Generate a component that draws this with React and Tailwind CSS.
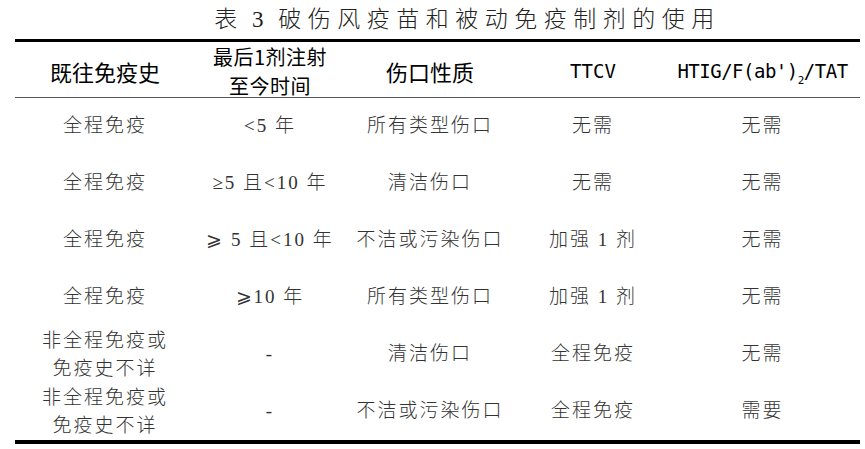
const cols = "grid grid-cols-[180px_150px_170px_156px_189px]";

const rows = [
  ["全程免疫", "<5 年", "所有类型伤口", "无需", "无需"],
  ["全程免疫", "≥5 且<10 年", "清洁伤口", "无需", "无需"],
  ["全程免疫", "⩾ 5 且<10 年", "不洁或污染伤口", "加强 1 剂", "无需"],
  ["全程免疫", "⩾10 年", "所有类型伤口", "加强 1 剂", "无需"],
  [["非全程免疫或", "免疫史不详"], "-", "清洁伤口", "全程免疫", "无需"],
  [["非全程免疫或", "免疫史不详"], "-", "不洁或污染伤口", "全程免疫", "需要"],
];

const serif = "font-[Liberation_Serif,Noto_Sans_CJK_SC,serif]";
const hei = "font-[Noto_Sans_CJK_SC,sans-serif]";
const mono = "font-[DejaVu_Sans_Mono,monospace]";

export default function App() {
  return (
    <div className="w-[865px] h-[449px] bg-white overflow-hidden">
      <div className={`h-[39px] flex items-center justify-center pl-[70px] text-[23px] leading-none tracking-[6.5px] [word-spacing:-4px] text-[#222] font-light ${serif}`}>
        表 3 破伤风疫苗和被动免疫制剂的使用
      </div>

      <div className="ml-[15px] w-[845px] border-t-[3px] border-b-[4px] border-black">
        <div className={`${cols} h-[56px] border-b border-[#555] text-black text-[22px] ${hei}`}>
          <Cell>既往免疫史</Cell>
          <Cell>
            <div className="text-[20px] leading-[29px] tracking-[0.5px]">
              <div>最后1剂注射</div>
              <div>至今时间</div>
            </div>
          </Cell>
          <Cell>伤口性质</Cell>
          <Cell>
            <span className={`${mono} text-[19px]`}>TTCV</span>
          </Cell>
          <Cell className="pr-[6px]">
            <span className={`${mono} text-[19px] tracking-[-0.5px]`}>
              HTIG/F(ab')<sub className="text-[11px] align-[-3px]">2</sub>/TAT
            </span>
          </Cell>
        </div>

        {rows.map((r, i) => (
          <div key={i} className={`${cols} h-[57px] text-[19px] text-[#333] tracking-[2px] font-light ${serif}`}>
            {r.map((c, j) => (
              <Cell key={j} className={j === 4 ? "pr-[6px]" : ""}>
                {Array.isArray(c) ? (
                  <div className="leading-[28px]">
                    {c.map((line) => (
                      <div key={line}>{line}</div>
                    ))}
                  </div>
                ) : (
                  c
                )}
              </Cell>
            ))}
          </div>
        ))}
      </div>
    </div>
  );
}

function Cell({ children, className = "" }) {
  return (
    <div className={`flex items-center justify-center text-center whitespace-nowrap ${className}`}>
      {children}
    </div>
  );
}
